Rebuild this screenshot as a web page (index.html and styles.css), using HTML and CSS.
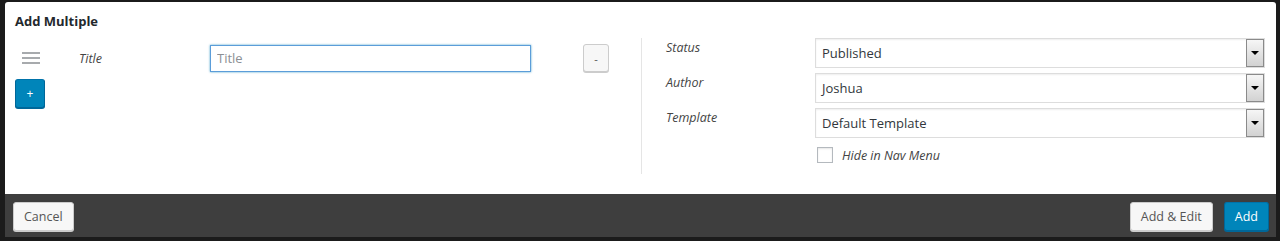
FILE: index.html
```html
<!DOCTYPE html>
<html lang="en">
<head>
    <meta charset="UTF-8">
    <meta name="viewport" content="width=device-width, initial-scale=1.0">
    <title>Add Multiple</title>
    <link rel="stylesheet" href="styles.css">
</head>
<body>
    <div class="modal">
        <div class="modal-body">
            <h1 class="modal-title">Add Multiple</h1>

            <div class="columns">
                <div class="col-left">
                    <div class="item-row">
                        <span class="handle">
                            <svg width="18" height="12" viewBox="0 0 18 12">
                                <rect x="0" y="0" width="18" height="2" fill="#a7aaad"/>
                                <rect x="0" y="5" width="18" height="2" fill="#a7aaad"/>
                                <rect x="0" y="10" width="18" height="2" fill="#a7aaad"/>
                            </svg>
                        </span>
                        <label class="item-label" for="title1">Title</label>
                        <input type="text" id="title1" class="title-input" placeholder="Title">
                        <button type="button" class="btn btn-small">-</button>
                    </div>
                    <button type="button" class="btn btn-primary btn-plus">+</button>
                </div>

                <div class="col-right">
                    <div class="field-row">
                        <label class="field-label">Status</label>
                        <div class="select-box">
                            <span class="select-value">Published</span>
                            <span class="select-arrow"></span>
                        </div>
                    </div>
                    <div class="field-row">
                        <label class="field-label">Author</label>
                        <div class="select-box">
                            <span class="select-value">Joshua</span>
                            <span class="select-arrow"></span>
                        </div>
                    </div>
                    <div class="field-row">
                        <label class="field-label">Template</label>
                        <div class="select-box">
                            <span class="select-value">Default Template</span>
                            <span class="select-arrow"></span>
                        </div>
                    </div>
                    <div class="check-row">
                        <span class="checkbox"></span>
                        <span class="check-label">Hide in Nav Menu</span>
                    </div>
                </div>
            </div>
        </div>

        <div class="modal-footer">
            <button type="button" class="btn">Cancel</button>
            <div class="footer-right">
                <button type="button" class="btn">Add &amp; Edit</button>
                <button type="button" class="btn btn-primary">Add</button>
            </div>
        </div>
    </div>
</body>
</html>
```

FILE: styles.css
```css
* {
    box-sizing: border-box;
    margin: 0;
    padding: 0;
}

body {
    background-color: #1b1b1b;
    font-family: 'Open Sans', 'Segoe UI', sans-serif;
    font-size: 12.5px;
    color: #32373c;
    padding: 2px 4px 0 5px;
    height: 241px;
    overflow: hidden;
}

.modal {
    width: 1271px;
}

.modal-body {
    background-color: #fff;
    height: 192px;
    border-radius: 3px 3px 0 0;
}

.modal-title {
    font-size: 13px;
    font-weight: 700;
    color: #23282d;
    line-height: 18px;
    padding: 10px 10px 8px 10px;
}

.columns {
    display: flex;
}

.col-left {
    width: 637px;
    height: 136px;
    padding-top: 6px;
    padding-left: 10px;
    border-right: 1px solid #e5e5e5;
}

.item-row {
    display: flex;
    align-items: center;
    height: 28px;
}

.handle {
    display: flex;
    margin-left: 7px;
    width: 18px;
}

.item-label {
    font-style: italic;
    color: #444;
    margin-left: 39px;
    width: 131px;
}

.title-input {
    width: 321px;
    height: 27px;
    border: 1px solid #5b9dd9;
    box-shadow: 0 0 2px rgba(30, 140, 190, 0.8);
    padding: 0 6px;
    font-family: inherit;
    font-size: 13px;
    color: #32373c;
    outline: none;
}

.title-input::placeholder {
    color: #8c8f94;
}

.btn {
    display: block;
    height: 29px;
    padding: 0 10px;
    font-family: inherit;
    font-size: 12.5px;
    line-height: 27px;
    color: #555;
    background-color: #f7f7f7;
    border: 1px solid #ccc;
    border-radius: 3px;
    box-shadow: 0 1px 0 #ccc;
    cursor: pointer;
}

.btn-small {
    width: 26px;
    height: 28px;
    padding: 0;
    margin-left: 52px;
    font-size: 11px;
}

.btn-primary {
    color: #fff;
    background-color: #0085ba;
    border-color: #0073aa #006799 #006799;
    box-shadow: 0 1px 0 #006799;
}

.btn-plus {
    width: 30px;
    padding: 0;
    margin-top: 7px;
    font-size: 12px;
}

.col-right {
    flex: 1;
    padding: 0 11px 0 24px;
}

.field-row {
    display: flex;
    margin-bottom: 5px;
}

.field-label {
    width: 149px;
    font-style: italic;
    color: #444;
    line-height: 20px;
}

.select-box {
    flex: 1;
    display: flex;
    height: 30px;
    border: 1px solid #ddd;
    box-shadow: inset 0 1px 2px rgba(0, 0, 0, 0.07);
}

.select-value {
    flex: 1;
    padding-left: 6px;
    line-height: 28px;
    font-size: 13px;
    color: #32373c;
}

.select-arrow {
    width: 18px;
    border: 1px solid #8a8a8a;
    background: linear-gradient(#f6f6f6, #d2d2d2);
    display: flex;
    align-items: center;
    justify-content: center;
}

.select-arrow::after {
    content: '';
    border-left: 4px solid transparent;
    border-right: 4px solid transparent;
    border-top: 4px solid #000;
}

.check-row {
    display: flex;
    align-items: center;
    height: 16px;
    margin-top: 9px;
    padding-left: 151px;
}

.checkbox {
    width: 16px;
    height: 16px;
    border: 1px solid #b4b9be;
    box-shadow: inset 0 1px 2px rgba(0, 0, 0, 0.1);
}

.check-label {
    margin-left: 9px;
    font-style: italic;
    color: #444;
}

.modal-footer {
    display: flex;
    justify-content: space-between;
    height: 43px;
    padding: 8px 7px 0 8px;
    background-color: #3e3e3e;
}

.footer-right {
    display: flex;
    gap: 11px;
}
```
